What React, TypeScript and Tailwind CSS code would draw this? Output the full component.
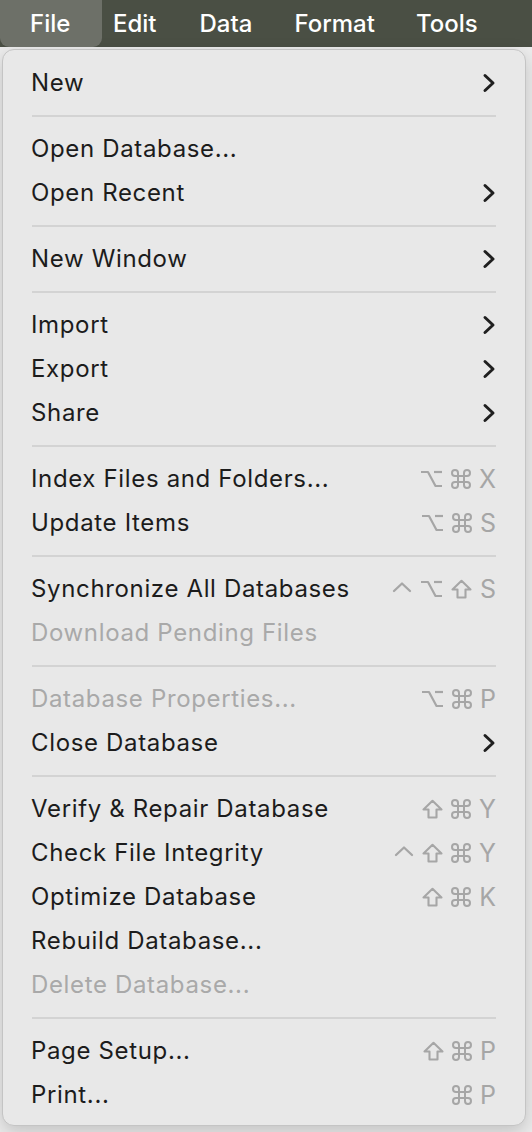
import React from 'react'

type Item = {
  label: string
  disabled?: boolean
  submenu?: boolean
  keys?: string[]
}

type Entry = Item | 'sep'

const entries: Entry[] = [
  { label: 'New', submenu: true },
  'sep',
  { label: 'Open Database...' },
  { label: 'Open Recent', submenu: true },
  'sep',
  { label: 'New Window', submenu: true },
  'sep',
  { label: 'Import', submenu: true },
  { label: 'Export', submenu: true },
  { label: 'Share', submenu: true },
  'sep',
  { label: 'Index Files and Folders...', keys: ['opt', 'cmd', 'X'] },
  { label: 'Update Items', keys: ['opt', 'cmd', 'S'] },
  'sep',
  { label: 'Synchronize All Databases', keys: ['ctrl', 'opt', 'shift', 'S'] },
  { label: 'Download Pending Files', disabled: true },
  'sep',
  { label: 'Database Properties...', disabled: true, keys: ['opt', 'cmd', 'P'] },
  { label: 'Close Database', submenu: true },
  'sep',
  { label: 'Verify & Repair Database', keys: ['shift', 'cmd', 'Y'] },
  { label: 'Check File Integrity', keys: ['ctrl', 'shift', 'cmd', 'Y'] },
  { label: 'Optimize Database', keys: ['shift', 'cmd', 'K'] },
  { label: 'Rebuild Database...' },
  { label: 'Delete Database...', disabled: true },
  'sep',
  { label: 'Page Setup...', keys: ['shift', 'cmd', 'P'] },
  { label: 'Print...', keys: ['cmd', 'P'] },
]

const Chevron = () => (
  <svg width="14" height="22" viewBox="0 0 14 22" fill="none">
    <path d="M3 3.5 L11 11 L3 18.5" stroke="#1f1f1f" strokeWidth="3" strokeLinecap="round" strokeLinejoin="round" />
  </svg>
)

// modifier glyphs, drawn to match the mac menu symbols
const Key = ({ k }: { k: string }) => {
  const stroke = '#a6a6a6'
  if (k === 'opt')
    return (
      <svg width="23" height="18" viewBox="0 0 23 18" fill="none">
        <path d="M1 2 H8 L15.5 16 H22" stroke={stroke} strokeWidth="2.2" strokeLinejoin="round" />
        <path d="M14 2 H22" stroke={stroke} strokeWidth="2.2" />
      </svg>
    )
  if (k === 'cmd')
    return (
      <svg width="20" height="20" viewBox="2 2 20 20" fill="none">
        <path
          d="M15 6v12a3 3 0 1 0 3-3H6a3 3 0 1 0 3 3V6a3 3 0 1 0-3 3h12a3 3 0 1 0-3-3"
          stroke={stroke}
          strokeWidth="2"
          strokeLinecap="round"
          strokeLinejoin="round"
        />
      </svg>
    )
  if (k === 'shift')
    return (
      <svg width="21" height="20" viewBox="0 0 21 20" fill="none">
        <path d="M10.5 1.8 L19.5 10.5 H14.5 V18.5 H6.5 V10.5 H1.5 Z" stroke={stroke} strokeWidth="2.1" strokeLinejoin="round" />
      </svg>
    )
  if (k === 'ctrl')
    return (
      <svg width="20" height="18" viewBox="0 0 20 18" fill="none">
        <path d="M2 11 L10 3.5 L18 11" stroke={stroke} strokeWidth="2.3" strokeLinecap="round" strokeLinejoin="round" />
      </svg>
    )
  return <span className="text-[25px] leading-none">{k}</span>
}

const MenuRow = ({ item }: { item: Item }) => (
  <div className="flex h-[44px] items-center justify-between pl-[28px] pr-[29px]">
    <span
      className={`text-[24px] leading-none tracking-[0.65px] ${item.disabled ? 'text-[#a9a9a9]' : 'text-[#1c1c1c]'}`}
    >
      {item.label}
    </span>
    {item.submenu && <Chevron />}
    {item.keys && (
      <span className="flex items-center gap-[8px] text-[#a6a6a6]">
        {item.keys.map((k, i) => (
          <Key key={i} k={k} />
        ))}
      </span>
    )}
  </div>
)

export default function App() {
  return (
    <div className="h-[1132px] w-[532px] overflow-hidden bg-[#ececec] font-['Inter',sans-serif]">
      {/* Menu bar */}
      <div className="flex h-[47px] items-stretch bg-[#4a4f44] text-[24px] font-medium text-white">
        <div className="flex w-[102px] items-center rounded-b-[9px] bg-[#6d7068] pl-[30px]">File</div>
        <div className="flex items-center pl-[11px]">Edit</div>
        <div className="flex items-center pl-[43px]">Data</div>
        <div className="flex items-center pl-[42px]">Format</div>
        <div className="flex items-center pl-[41px]">Tools</div>
      </div>

      {/* Dropdown */}
      <div className="ml-[2px] mt-[2px] w-[524px] rounded-[12px] border border-[#c4c4c4] bg-[#e8e8e8] pb-[8px] pt-[11px] shadow-[0_6px_18px_rgba(0,0,0,0.18)]">
        {entries.map((e, i) =>
          e === 'sep' ? (
            <div key={i} className="flex h-[22px] items-center px-[29px]">
              <div className="h-[2px] w-full bg-[#d3d3d3]" />
            </div>
          ) : (
            <MenuRow key={i} item={e} />
          )
        )}
      </div>
    </div>
  )
}
